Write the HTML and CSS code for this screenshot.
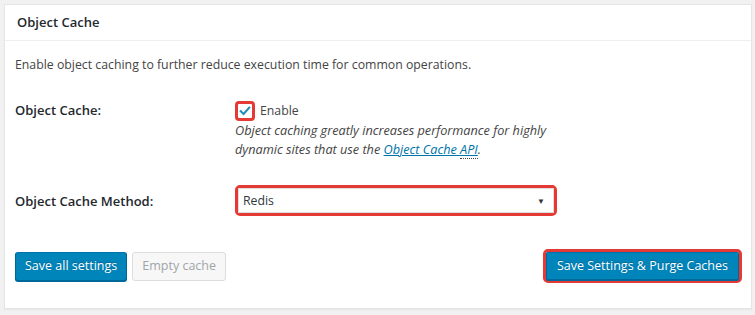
FILE: index.html
```
<!DOCTYPE html>
<html>
<head>
<meta charset="utf-8">
<link rel="stylesheet" href="styles.css">
</head>
<body>
<div class="panel">
  <h2 class="panel-title">Object Cache</h2>
  <div class="panel-body">
    <p class="intro">Enable object caching to further reduce execution time for common operations.</p>
    <div class="row row-cache">
      <div class="label">Object Cache:</div>
      <div class="field">
        <label class="check-line"><span class="check-wrap"><span class="checkbox"><svg viewBox="0 0 16 16" width="16" height="16"><path d="M3.2 8.3 L6.4 11.4 L12.8 4.2" fill="none" stroke="#1e8cbe" stroke-width="2.4" stroke-linecap="square"/></svg></span></span><span>Enable</span></label>
        <p class="desc">Object caching greatly increases performance for highly dynamic sites that use the <a href="#">Object Cache <span class="abbr">API</span></a>.</p>
      </div>
    </div>
    <div class="row row-method">
      <div class="label">Object Cache Method:</div>
      <div class="field">
        <div class="select-wrap"><div class="select"><span>Redis</span><span class="arrow">&#9660;</span></div></div>
      </div>
    </div>
    <div class="actions">
      <div class="left-btns">
        <button class="btn btn-primary">Save all settings</button>
        <button class="btn btn-disabled">Empty cache</button>
      </div>
      <div class="hl-btn"><button class="btn btn-primary">Save Settings &amp; Purge Caches</button></div>
    </div>
  </div>
</div>
</body>
</html>
```
FILE: styles.css
```
html, body { margin: 0; padding: 0; }
body {
  background: #f1f1f1;
  font-family: "Open Sans", sans-serif;
  font-size: 12.3px;
  color: #444;
  width: 755px;
  height: 315px;
  padding: 4px 3px 0 4px;
  box-sizing: border-box;
}
.panel {
  background: #fff;
  border: 1px solid #e5e5e5;
  box-shadow: 0 1px 1px rgba(0,0,0,.04);
  width: 748px;
  height: 305px;
  box-sizing: border-box;
}
.panel-title {
  margin: 0;
  font-size: 13px;
  font-weight: 600;
  color: #23282d;
  height: 35px;
  line-height: 35px;
  padding: 0 12px;
  border-bottom: 1px solid #eee;
}
.panel-body { padding: 0 11px 0 10px; }
.intro { margin: 14px 0 0; line-height: 20px; }
.row { display: flex; }
.label { width: 220px; font-weight: 600; font-size: 13px; color: #23282d; }
.row-cache { margin-top: 26px; }
.check-line { display: flex; align-items: center; gap: 5px; line-height: 20px; height: 20px; }
.check-wrap {
  display: inline-flex; align-items: center; justify-content: center;
  width: 20px; height: 20px; box-sizing: border-box;
  border: 2px solid #e53935; border-radius: 4px; background: #e53935;
}
.checkbox {
  display: block; width: 14px; height: 14px; background: #fff;
  border-radius: 1px;
}
.checkbox svg { display: block; width: 14px; height: 14px; }
.desc { margin: 0; font-style: italic; font-size: 12.7px; line-height: 19px; width: 330px; }
.desc a { color: #0073aa; text-decoration: underline; }
.abbr { border-bottom: 1px dotted #444; }
.row-method { margin-top: 26px; align-items: center; }
.select-wrap {
  border: 3px solid #e53935; border-radius: 5px;
  width: 322px; box-sizing: border-box;
}
.select {
  display: flex; justify-content: space-between; align-items: center;
  height: 23px; padding: 0 8px 0 4px; background: #fff;
  border: 1px solid #ddd; color: #32373c;
}
.arrow { font-size: 8px; color: #333; }
.actions { display: flex; justify-content: space-between; align-items: center; margin-top: 33px; }
.left-btns { display: flex; gap: 5px; }
.btn {
  font-family: inherit; font-size: 12.5px; height: 29px; line-height: 26px;
  padding: 0 9px; border-radius: 3px; border: 1px solid; box-sizing: border-box;
}
.btn-primary {
  background: #0085ba; border-color: #0073aa #006799 #006799;
  box-shadow: 0 1px 0 #006799; color: #fff; text-shadow: 0 -1px 1px #006799;
}
.btn-disabled {
  background: #f7f7f7; border-color: #ddd; color: #a0a5aa;
}
.hl-btn { border: 3px solid #e53935; border-radius: 5px; margin-right: -2px; }
.hl-btn .btn { display: block; border-radius: 2px; height: 28px; padding: 0 10px; }
```
